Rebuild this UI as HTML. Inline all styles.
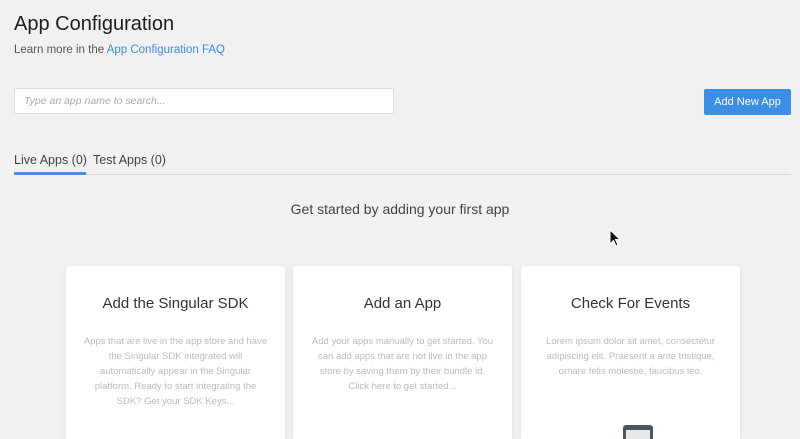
<!DOCTYPE html>
<html style="height:439px;overflow:hidden"><head><style>
body{margin:0;width:800px;height:439px;background:#f1f1f1;font-family:"Liberation Sans",sans-serif;overflow:hidden;position:relative;color:#222}
.a{position:absolute}
h1{position:absolute;left:14px;top:13px;margin:0;font-size:20px;font-weight:normal;color:#1d1d1d}
.card{position:absolute;top:266px;width:219px;height:173px;background:#fff;border-radius:3px 3px 0 0;box-shadow:0 1px 6px rgba(0,0,0,.08);text-align:center;overflow:hidden}
.card h3{margin:29px 0 0;font-size:15px;font-weight:normal;color:#333}
.card p{margin:22px 16px 0;font-size:9.5px;line-height:15px;color:#bbb}
</style></head><body>
<h1>App Configuration</h1>
<div class="a" style="left:14px;top:44px;font-size:11.5px;color:#555">Learn more in the <span style="color:#3a8ee0">App Configuration FAQ</span></div>
<div class="a" style="left:14px;top:88px;width:378px;height:24px;background:#fff;border:1px solid #ddd;border-radius:2px"><span style="position:absolute;left:9px;top:6px;font-size:10.5px;font-style:italic;color:#aaa">Type an app name to search...</span></div>
<div class="a" style="left:704px;top:89px;width:87px;height:26px;background:#3a8ee6;border-radius:2px;color:#fff;font-size:11px;line-height:26px;text-align:center">Add New App</div>
<div class="a" style="left:14px;top:153px;font-size:12.5px;color:#444">Live Apps (0)</div>
<div class="a" style="left:93px;top:153px;font-size:12.5px;color:#444">Test Apps (0)</div>
<div class="a" style="left:14px;top:174px;width:777px;height:1px;background:#d6d6d6"></div>
<div class="a" style="left:14px;top:172px;width:72px;height:3px;background:#4a8ee0"></div>
<div class="a" style="left:0;width:800px;top:201px;text-align:center;font-size:14px;color:#444">Get started by adding your first app</div>
<svg class="a" style="left:609px;top:229px" width="14" height="20"><path d="M1 1 L1 15 L4.5 11.5 L7 17 L9 16 L6.5 10.5 L11 10.5 Z" fill="#111" stroke="#fff" stroke-width="1"/></svg>
<div class="card" style="left:66px"><h3>Add the Singular SDK</h3><p>Apps that are live in the app store and have the Singular SDK integrated will automatically appear in the Singular platform. Ready to start integrating the SDK? Get your SDK Keys...</p></div>
<div class="card" style="left:293px"><h3>Add an App</h3><p>Add your apps manually to get started. You can add apps that are not live in the app store by saving them by their bundle id. Click here to get started...</p></div>
<div class="card" style="left:521px"><h3>Check For Events</h3><p>Lorem ipsum dolor sit amet, consectetur adipiscing elit. Praesent a ante tristique, ornare felis molestie, faucibus leo.</p>
<div class="a" style="left:102px;top:159px;width:30px;height:20px;background:#4d5560;border-radius:3px"><div style="margin:5px 3px 0;height:15px;background:#e8e8e8"></div></div></div>
</body></html>
